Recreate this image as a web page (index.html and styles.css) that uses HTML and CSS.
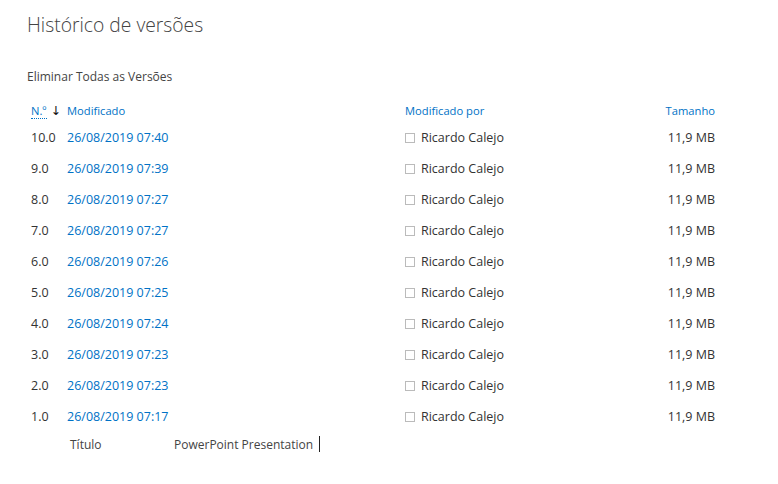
FILE: index.html
```html
<!DOCTYPE html>
<html lang="pt">
<head>
<meta charset="utf-8">
<link rel="stylesheet" href="styles.css">
</head>
<body>
<div class="page">
  <h1 class="title">Histórico de versões</h1>
  <div class="action">Eliminar Todas as Versões</div>
  <table class="versions">
    <thead>
      <tr>
        <th class="c-num"><span class="abbr">N.º</span><span class="arrow">↓</span></th>
        <th class="c-mod">Modificado</th>
        <th class="c-by">Modificado por</th>
        <th class="c-size">Tamanho</th>
      </tr>
    </thead>
    <tbody>
      <tr><td class="c-num">10.0</td><td class="c-mod"><a>26/08/2019 07:40</a></td><td class="c-by"><span class="box"></span>Ricardo Calejo</td><td class="c-size">11,9 MB</td></tr>
      <tr><td class="c-num">9.0</td><td class="c-mod"><a>26/08/2019 07:39</a></td><td class="c-by"><span class="box"></span>Ricardo Calejo</td><td class="c-size">11,9 MB</td></tr>
      <tr><td class="c-num">8.0</td><td class="c-mod"><a>26/08/2019 07:27</a></td><td class="c-by"><span class="box"></span>Ricardo Calejo</td><td class="c-size">11,9 MB</td></tr>
      <tr><td class="c-num">7.0</td><td class="c-mod"><a>26/08/2019 07:27</a></td><td class="c-by"><span class="box"></span>Ricardo Calejo</td><td class="c-size">11,9 MB</td></tr>
      <tr><td class="c-num">6.0</td><td class="c-mod"><a>26/08/2019 07:26</a></td><td class="c-by"><span class="box"></span>Ricardo Calejo</td><td class="c-size">11,9 MB</td></tr>
      <tr><td class="c-num">5.0</td><td class="c-mod"><a>26/08/2019 07:25</a></td><td class="c-by"><span class="box"></span>Ricardo Calejo</td><td class="c-size">11,9 MB</td></tr>
      <tr><td class="c-num">4.0</td><td class="c-mod"><a>26/08/2019 07:24</a></td><td class="c-by"><span class="box"></span>Ricardo Calejo</td><td class="c-size">11,9 MB</td></tr>
      <tr><td class="c-num">3.0</td><td class="c-mod"><a>26/08/2019 07:23</a></td><td class="c-by"><span class="box"></span>Ricardo Calejo</td><td class="c-size">11,9 MB</td></tr>
      <tr><td class="c-num">2.0</td><td class="c-mod"><a>26/08/2019 07:23</a></td><td class="c-by"><span class="box"></span>Ricardo Calejo</td><td class="c-size">11,9 MB</td></tr>
      <tr><td class="c-num">1.0</td><td class="c-mod"><a>26/08/2019 07:17</a></td><td class="c-by"><span class="box"></span>Ricardo Calejo</td><td class="c-size">11,9 MB</td></tr>
    </tbody>
  </table>
  <div class="prop">
    <span class="prop-label">Título</span>
    <span class="prop-value">PowerPoint Presentation</span><span class="caret"></span>
  </div>
</div>
</body>
</html>
```
FILE: styles.css
```css
html, body {
  margin: 0;
  padding: 0;
  background: #fff;
}
body {
  font-family: "Open Sans", "Noto Sans", sans-serif;
  color: #333;
}
.page {
  padding: 10px 0 0 27px;
}
.title {
  margin: 0;
  font-size: 19.3px;
  font-weight: 300;
  color: #444;
  line-height: 30px;
}
.action {
  margin-top: 29px;
  font-size: 12px;
  color: #444;
  line-height: 16px;
}
.versions {
  margin-top: 16px;
  border-collapse: collapse;
  font-size: 12.5px;
}
.versions thead tr {
  height: 21px;
}
.versions th {
  font-weight: 400;
  color: #0072c6;
  text-align: left;
  padding: 0 0 3px 0;
  line-height: 15px;
  font-size: 11.2px;
  vertical-align: middle;
}
.versions tbody tr {
  height: 31px;
}
.versions td {
  padding: 0;
  line-height: 16px;
  vertical-align: middle;
  color: #333;
}
.c-num {
  width: 36px;
  padding-left: 4px !important;
}
.c-mod {
  width: 338px;
}
.c-by {
  width: 230px;
}
.c-size {
  width: 80px;
  text-align: right !important;
}
.versions a {
  color: #0072c6;
  text-decoration: none;
}
.abbr {
  color: #0072c6;
  border-bottom: 1px dotted #0072c6;
}
.arrow {
  color: #111;
  margin-left: 4px;
  font-size: 12.5px;
  font-family: "DejaVu Sans", sans-serif;
}
.box {
  display: inline-block;
  width: 8px;
  height: 8px;
  border: 1px solid #bbb;
  margin-right: 6px;
  vertical-align: -1px;
}
.prop {
  display: flex;
  align-items: center;
  font-size: 12px;
  color: #444;
  padding-left: 43px;
  height: 24px;
}
.prop-label {
  width: 104px;
}
.caret {
  display: inline-block;
  width: 1px;
  height: 16px;
  background: #222;
  margin-left: 6px;
}
```
